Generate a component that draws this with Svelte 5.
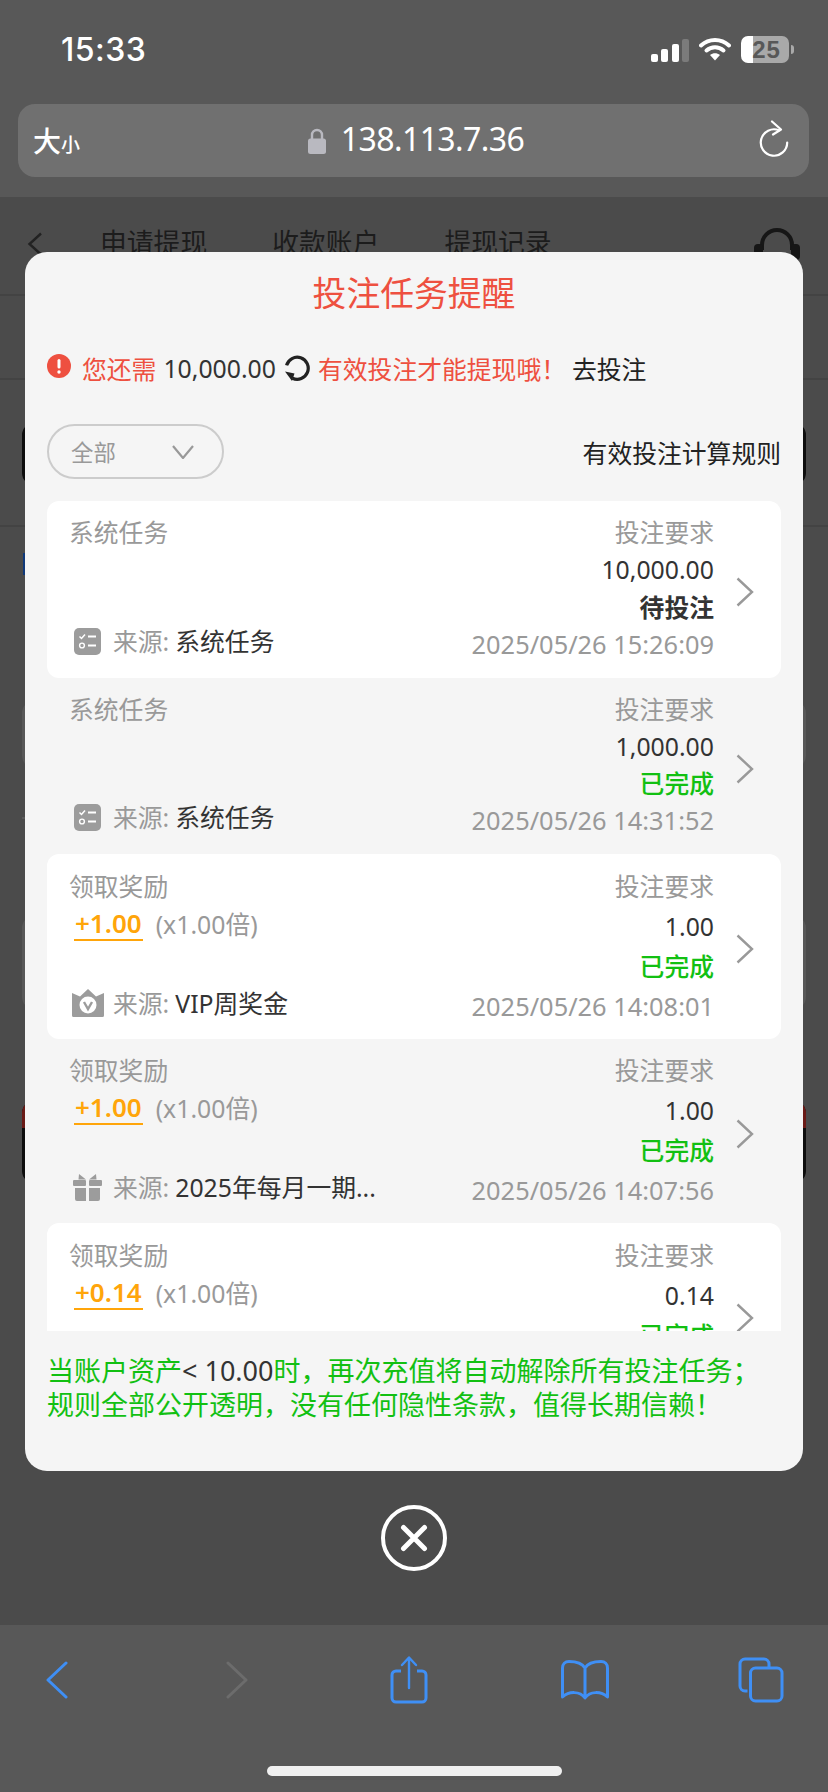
<script>
  const tabs = ['申请提现', '收款账户', '提现记录'];

  const tasks = [
    { type: '系统任务', need: '10,000.00', status: '待投注', icon: 'list', source: '系统任务', time: '2025/05/26 15:26:09' },
    { type: '系统任务', need: '1,000.00', status: '已完成', icon: 'list', source: '系统任务', time: '2025/05/26 14:31:52' },
    { type: '领取奖励', bonus: '+1.00', need: '1.00', status: '已完成', icon: 'vip', source: 'VIP周奖金', time: '2025/05/26 14:08:01' },
    { type: '领取奖励', bonus: '+1.00', need: '1.00', status: '已完成', icon: 'gift', source: '2025年每月一期...', time: '2025/05/26 14:07:56' },
    { type: '领取奖励', bonus: '+0.14', need: '0.14', status: '已完成', icon: 'vip', source: 'VIP周奖金', time: '2025/05/26 14:00:12' }
  ];
</script>

<div class="screen">
  <header class="chrome">
    <div class="status">
      <span class="clock">15:33</span>
      <div class="indicators">
        <div class="signal">
          <i style="height:8px"></i><i style="height:13px"></i><i style="height:18px"></i><i class="off" style="height:23px"></i>
        </div>
        <svg class="wifi" width="32" height="25" viewBox="0 0 32 25">
          <path d="M2 9.5C10 2 22 2 30 9.5" fill="none" stroke="#fff" stroke-width="4" stroke-linecap="round" />
          <path d="M7.5 14.5C12.5 10.2 19.5 10.2 24.5 14.5" fill="none" stroke="#fff" stroke-width="4" stroke-linecap="round" />
          <path d="M11 19C14 16.5 18 16.5 21 19L16 24.5Z" fill="#fff" />
        </svg>
        <div class="battery"><span>25</span></div>
        <div class="nub"></div>
      </div>
    </div>
    <div class="address">
      <span class="size"><b>大</b><small>小</small></span>
      <div class="url">
        <svg width="18" height="26" viewBox="0 0 18 26">
          <path d="M4 12V7a5 5 0 0 1 10 0v5" fill="none" stroke="#b9b9c0" stroke-width="2.4" />
          <rect x="0" y="10.5" width="18" height="15.5" rx="2.5" fill="#b9b9c0" />
        </svg>
        <span>138.113.7.36</span>
      </div>
      <svg class="reload" width="30" height="37" viewBox="0 0 30 37">
        <path d="M20 10.3A13.2 13.2 0 1 0 28.2 22.5" fill="none" stroke="#fff" stroke-width="2.2" stroke-linecap="round" />
        <path d="M13 1.5L22 9.5L14 14.5" fill="none" stroke="#fff" stroke-width="2.2" stroke-linecap="round" stroke-linejoin="round" />
      </svg>
    </div>
  </header>

  <main class="page">
    <div class="behind">
      <nav class="tabs">
        <svg class="back" width="16" height="24" viewBox="0 0 16 24">
          <path d="M14 1.5L2.5 12L14 22.5" fill="none" stroke="#222" stroke-width="2.4" />
        </svg>
        {#each tabs as tab}
          <span>{tab}</span>
        {/each}
        <svg class="headset" width="46" height="36" viewBox="0 0 46 36">
          <path d="M8 24V19a15 15 0 0 1 30 0v5" fill="none" stroke="#161616" stroke-width="4" />
          <rect x="0" y="18" width="9" height="16" rx="4" fill="#161616" />
          <rect x="37" y="18" width="9" height="16" rx="4" fill="#161616" />
        </svg>
      </nav>
      <div class="strip"></div>
      <div class="panel dark" style="height:62px;margin-top:43px"></div>
      <div class="strip short"></div>
      <div class="blue"></div>
      <div class="panel" style="height:67px;margin-top:126px"></div>
      <div class="strip dash"></div>
      <div class="panel" style="height:93px;margin-top:97px"></div>
      <div class="panel dark red" style="height:82px;margin-top:92px"></div>
    </div>

    <div class="modal">
      <section class="dialog">
        <h2>投注任务提醒</h2>
        <div class="notice">
          <svg class="alert" width="24" height="24" viewBox="0 0 24 24">
            <circle cx="12" cy="12" r="12" fill="#ee5040" />
            <rect x="10.5" y="5" width="3" height="9.5" rx="1.5" fill="#fff" />
            <circle cx="12" cy="18" r="1.7" fill="#fff" />
          </svg>
          <span class="red-text first">您还需</span>
          <span class="sum">10,000.00</span>
          <svg class="spin" width="26" height="26" viewBox="0 0 26 26">
            <path d="M2.6 10.4A11 11 0 1 1 8.5 23.2" fill="none" stroke="#222" stroke-width="3.2" />
            <path d="M1 16.5L10.5 18.5L8 26Z" fill="#222" />
          </svg>
          <span class="red-text">有效投注才能提现哦！</span>
          <span class="go">去投注</span>
        </div>

        <div class="filter">
          <div class="select">
            <span>全部</span>
            <svg width="22" height="14" viewBox="0 0 22 14">
              <path d="M1 1L11 13L21 1" fill="none" stroke="#999" stroke-width="2.2" />
            </svg>
          </div>
          <span class="rules">有效投注计算规则</span>
        </div>

        <div class="list">
          {#each tasks as task, i}
            <article class="task" class:white={i % 2 === 0} class:reward={task.bonus}>
              <div class="left">
                <div class="muted">{task.type}</div>
                {#if task.bonus}
                  <div class="bonus"><b>{task.bonus}</b><span>(x1.00倍)</span></div>
                {/if}
                <div class="source">
                  <span class="glyph">
                    {#if task.icon === 'list'}
                      <svg width="27" height="27" viewBox="0 0 27 27">
                        <rect width="27" height="27" rx="5" fill="#9c9c9c" />
                        <path d="M5.5 8.5L7.5 10.5L11 6.5" fill="none" stroke="#fff" stroke-width="1.5" />
                        <circle cx="8" cy="17.5" r="2.4" fill="none" stroke="#fff" stroke-width="1.4" />
                        <path d="M14 8.5H22M14 17.5H22" stroke="#fff" stroke-width="2" />
                      </svg>
                    {:else if task.icon === 'vip'}
                      <svg width="32" height="28" viewBox="0 0 32 28">
                        <path d="M0 4L8 7.5L16 0L24 7.5L32 4V26.5a1.5 1.5 0 0 1-1.5 1.5H1.5a1.5 1.5 0 0 1-1.5-1.5Z" fill="#9c9c9c" />
                        <circle cx="16" cy="16" r="8.5" fill="#fff" />
                        <path d="M12 13L16 20L20 13" fill="none" stroke="#9c9c9c" stroke-width="2.4" />
                      </svg>
                    {:else}
                      <svg width="29" height="28" viewBox="0 0 29 28">
                        <path d="M6 1L13 6.5H5.5Z M23 1L16 6.5H23.5Z" fill="#9c9c9c" />
                        <rect x="0" y="7" width="13" height="6" rx="1" fill="#9c9c9c" />
                        <rect x="16" y="7" width="13" height="6" rx="1" fill="#9c9c9c" />
                        <path d="M2 15H13V28H4a2 2 0 0 1-2-2Z M16 15H27V26a2 2 0 0 1-2 2H16Z" fill="#9c9c9c" />
                      </svg>
                    {/if}
                  </span>
                  <span class="muted from">来源:</span>
                  <span class="name">{task.source}</span>
                </div>
              </div>
              <div class="right">
                <div class="muted">投注要求</div>
                <div class="need">{task.need}</div>
                <div class="state" class:done={task.status === '已完成'}>{task.status}</div>
                <div class="muted time">{task.time}</div>
              </div>
              <svg class="more" width="18" height="30" viewBox="0 0 18 30">
                <path d="M1.5 1.5L16 15L1.5 28.5" fill="none" stroke="#999" stroke-width="2.4" />
              </svg>
            </article>
          {/each}
        </div>

        <p class="foot">当账户资产<span>&lt; 10.00</span>时，再次充值将自动解除所有投注任务；<br />规则全部公开透明，没有任何隐性条款，值得长期信赖！</p>
      </section>

      <button class="close" aria-label="关闭">
        <svg width="66" height="66" viewBox="0 0 66 66">
          <circle cx="33" cy="33" r="31" fill="none" stroke="#fff" stroke-width="4" />
          <path d="M22.5 22.5L43.5 43.5M43.5 22.5L22.5 43.5" stroke="#fff" stroke-width="5" stroke-linecap="round" />
        </svg>
      </button>
    </div>
  </main>

  <footer class="toolbar">
    <div class="tools">
      <svg width="22" height="38" viewBox="0 0 22 38">
        <path d="M20 2L2 19L20 36" fill="none" stroke="#3f8ff5" stroke-width="3" stroke-linecap="round" stroke-linejoin="round" />
      </svg>
      <svg class="fwd" width="22" height="38" viewBox="0 0 22 38">
        <path d="M2 2L20 19L2 36" fill="none" stroke="#6c6c6c" stroke-width="3" stroke-linecap="round" stroke-linejoin="round" />
      </svg>
      <svg width="38" height="48" viewBox="0 0 38 48">
        <path d="M11 15H6a4 4 0 0 0-4 4V42a4 4 0 0 0 4 4H32a4 4 0 0 0 4-4V19a4 4 0 0 0-4-4H27" fill="none" stroke="#3f8ff5" stroke-width="3" />
        <path d="M19 32V2M12 9L19 1.5L26 9" fill="none" stroke="#3f8ff5" stroke-width="2.4" stroke-linecap="round" stroke-linejoin="round" />
      </svg>
      <svg width="48" height="40" viewBox="0 0 48 40">
        <path d="M24 8C21 3 15 1.5 8 1.5C4 1.5 1.5 4 1.5 8V37C8 31 19 31 24 38C29 31 40 31 46.5 37V8C46.5 4 44 1.5 40 1.5C33 1.5 27 3 24 8ZM24 8V38" fill="none" stroke="#3f8ff5" stroke-width="3" stroke-linejoin="round" />
      </svg>
      <svg width="46" height="46" viewBox="0 0 46 46">
        <path d="M9.5 34H7a5 5 0 0 1-5-5V7a5 5 0 0 1 5-5H26a5 5 0 0 1 5 5V10" fill="none" stroke="#3f8ff5" stroke-width="3" />
        <rect x="12.5" y="11" width="31.5" height="33" rx="5" fill="none" stroke="#3f8ff5" stroke-width="3" />
      </svg>
    </div>
    <div class="home"></div>
  </footer>
</div>

<style>
  :global(body) {
    margin: 0;
    background: #4b4b4b;
  }

  .screen {
    width: 828px;
    height: 1792px;
    display: flex;
    flex-direction: column;
    overflow: hidden;
    font-family: "Noto Sans", "Noto Sans CJK SC", sans-serif;
    font-size: 24.8px;
  }

  /* browser chrome */
  .chrome {
    height: 197px;
    flex: none;
    background: #585858;
    box-sizing: border-box;
    padding: 0 19px 0 18px;
    color: #fff;
  }

  .status {
    height: 104px;
    display: flex;
    justify-content: space-between;
    box-sizing: border-box;
    padding: 36px 15px 0 43px;
  }

  .clock {
    font-family: Inter, sans-serif;
    font-weight: 500;
    font-size: 32px;
    line-height: 28px;
    letter-spacing: 0.5px;
  }

  .indicators {
    display: flex;
    align-items: flex-start;
    height: 28px;
  }

  .signal {
    display: flex;
    align-items: flex-end;
    gap: 3.5px;
    height: 25px;
    margin-top: 1px;
  }

  .signal i {
    width: 7px;
    background: #fff;
    border-radius: 2px;
  }

  .signal i.off {
    background: #7b7b7b;
  }

  .wifi {
    margin: 0 10px;
  }

  .battery {
    width: 48px;
    height: 27px;
    border-radius: 7px;
    background: linear-gradient(90deg, #fff 12px, #a9a9a9 12px);
    text-align: center;
  }

  .battery span {
    display: block;
    font: 700 24px/27px "Liberation Sans", sans-serif;
    color: #585858;
    letter-spacing: 1px;
    padding-left: 3px;
  }

  .nub {
    width: 3px;
    height: 9px;
    margin: 9px 0 0 2px;
    background: #a9a9a9;
    border-radius: 0 3px 3px 0;
  }

  .address {
    height: 73px;
    background: #707070;
    border-radius: 17px;
    position: relative;
    display: flex;
    align-items: center;
    justify-content: center;
  }

  .size {
    position: absolute;
    left: 15px;
    top: 19px;
    font-size: 28px;
    line-height: 36px;
  }

  .size b {
    font-weight: 500;
  }

  .size small {
    font-size: 19px;
    font-weight: 500;
  }

  .url {
    display: flex;
    align-items: center;
    gap: 15px;
    font-size: 32px;
    letter-spacing: -0.6px;
    line-height: 40px;
    margin-left: 5px;
  }

  .url span {
    margin-top: -4px;
  }

  .reload {
    position: absolute;
    right: 20px;
    top: 16px;
  }

  /* page under the dialog */
  .page {
    flex: 1;
    position: relative;
    background: #4b4b4b;
  }

  .behind {
    display: flex;
    flex-direction: column;
  }

  .tabs {
    height: 99px;
    box-sizing: border-box;
    border-bottom: 2px solid #434343;
    display: flex;
    gap: 65px;
    padding: 28px 0 0 100px;
    font-size: 26.8px;
    line-height: 36px;
    color: #1c1c1c;
    position: relative;
  }

  .back {
    position: absolute;
    left: 27px;
    top: 35px;
  }

  .headset {
    position: absolute;
    right: 28px;
    top: 29px;
  }

  .strip {
    height: 84px;
    box-sizing: border-box;
    border-bottom: 2px solid #434343;
  }

  .strip.short {
    height: 42px;
  }

  .strip.dash {
    height: 51px;
    border-bottom-color: #5a5a5a;
    margin: 0 780px 0 22px;
  }

  .panel {
    margin: 0 22px;
    box-sizing: border-box;
    border: 3px solid #585858;
    border-radius: 12px;
  }

  .panel.dark {
    border-color: #0d0d0d;
  }

  .panel.red {
    position: relative;
  }

  .panel.red::before {
    content: "";
    position: absolute;
    left: -3px;
    right: -3px;
    top: -3px;
    height: 27px;
    background: #6a1a16;
    border-radius: 12px 12px 0 0;
  }

  .blue {
    width: 10px;
    height: 22px;
    margin: 26px 0 0 23px;
    background: #10397a;
  }

  /* dialog */
  .modal {
    position: absolute;
    top: 55px;
    left: 25px;
    width: 778px;
    display: flex;
    flex-direction: column;
    align-items: center;
  }

  .dialog {
    width: 100%;
    height: 1219px;
    box-sizing: border-box;
    padding: 0 22px;
    background: #f5f5f5;
    border-radius: 22px;
  }

  h2 {
    margin: 0;
    height: 84px;
    padding-top: 17px;
    box-sizing: border-box;
    text-align: center;
    font-size: 33.8px;
    font-weight: 400;
    line-height: 48px;
    color: #ee5040;
  }

  .notice {
    display: flex;
    align-items: center;
    height: 64px;
    white-space: nowrap;
    color: #333;
  }

  .alert {
    margin: -4px 11px 0 0;
  }

  .red-text {
    color: #ee5040;
  }

  .sum {
    margin: 0 8px 0 7px;
  }

  .spin {
    margin-right: 8px;
  }

  .go {
    margin-left: 6px;
    color: #222;
  }

  .filter {
    display: flex;
    align-items: center;
    justify-content: space-between;
    margin-top: 24px;
  }

  .select {
    width: 177px;
    height: 55px;
    box-sizing: border-box;
    border: 2px solid #ccc;
    border-radius: 28px;
    display: flex;
    align-items: center;
    justify-content: space-between;
    padding: 0 28px 0 22px;
    font-size: 22.4px;
    color: #999;
  }

  .rules {
    color: #222;
  }

  .list {
    height: 830px;
    margin-top: 22px;
    overflow: hidden;
  }

  .task {
    display: flex;
    justify-content: space-between;
    position: relative;
    box-sizing: border-box;
    padding: 13px 67px 14.5px 22px;
    line-height: 37.25px;
    border-radius: 12px;
    white-space: nowrap;
  }

  .task.white {
    background: #fff;
  }

  .task.reward {
    padding-top: 11.5px;
    padding-bottom: 13px;
    line-height: 40px;
  }

  .muted {
    color: #999;
  }

  .left {
    display: flex;
    flex-direction: column;
  }

  .bonus {
    display: flex;
    align-items: center;
    gap: 13px;
    margin: -2px 0 0 5px;
    color: #999;
  }

  .bonus b {
    font-size: 26px;
    font-weight: 600;
    color: #ffa50a;
    line-height: 32px;
    border-bottom: 2px solid #ffa50a;
    padding: 0 1px;
  }

  .source {
    display: flex;
    align-items: center;
    margin-top: auto;
    margin-bottom: 3px;
    margin-left: 5px;
  }

  .glyph {
    width: 27px;
    height: 28px;
    margin-right: 12px;
    display: flex;
    align-items: center;
    justify-content: center;
    flex: none;
  }

  .glyph svg {
    flex: none;
  }

  .from {
    margin-right: 6px;
  }

  .name {
    color: #333;
  }

  .right {
    text-align: right;
  }

  .time {
    font-size: 25.4px;
  }

  .need {
    color: #333;
  }

  .state {
    font-weight: 700;
    color: #333;
  }

  .state.done {
    font-weight: 500;
    color: #12c012;
  }

  .more {
    position: absolute;
    right: 27px;
    top: 50%;
    margin-top: -12px;
  }

  .foot {
    margin: 23px 0 0;
    font-size: 27px;
    line-height: 34px;
    white-space: nowrap;
    color: #12c012;
  }

  .foot span {
    color: #333;
  }

  .close {
    margin-top: 34px;
    padding: 0;
    border: 0;
    background: none;
    line-height: 0;
  }

  /* bottom toolbar */
  .toolbar {
    height: 167px;
    flex: none;
    background: #585858;
    position: relative;
  }

  .tools {
    display: grid;
    grid-template-columns: repeat(5, 176px);
    justify-items: center;
    align-items: center;
    height: 109px;
    margin-left: -31px;
  }

  .fwd {
    margin-left: 8px;
  }

  .home {
    position: absolute;
    left: 267px;
    top: 141px;
    width: 295px;
    height: 10px;
    border-radius: 5px;
    background: #f0f0f0;
  }
</style>
